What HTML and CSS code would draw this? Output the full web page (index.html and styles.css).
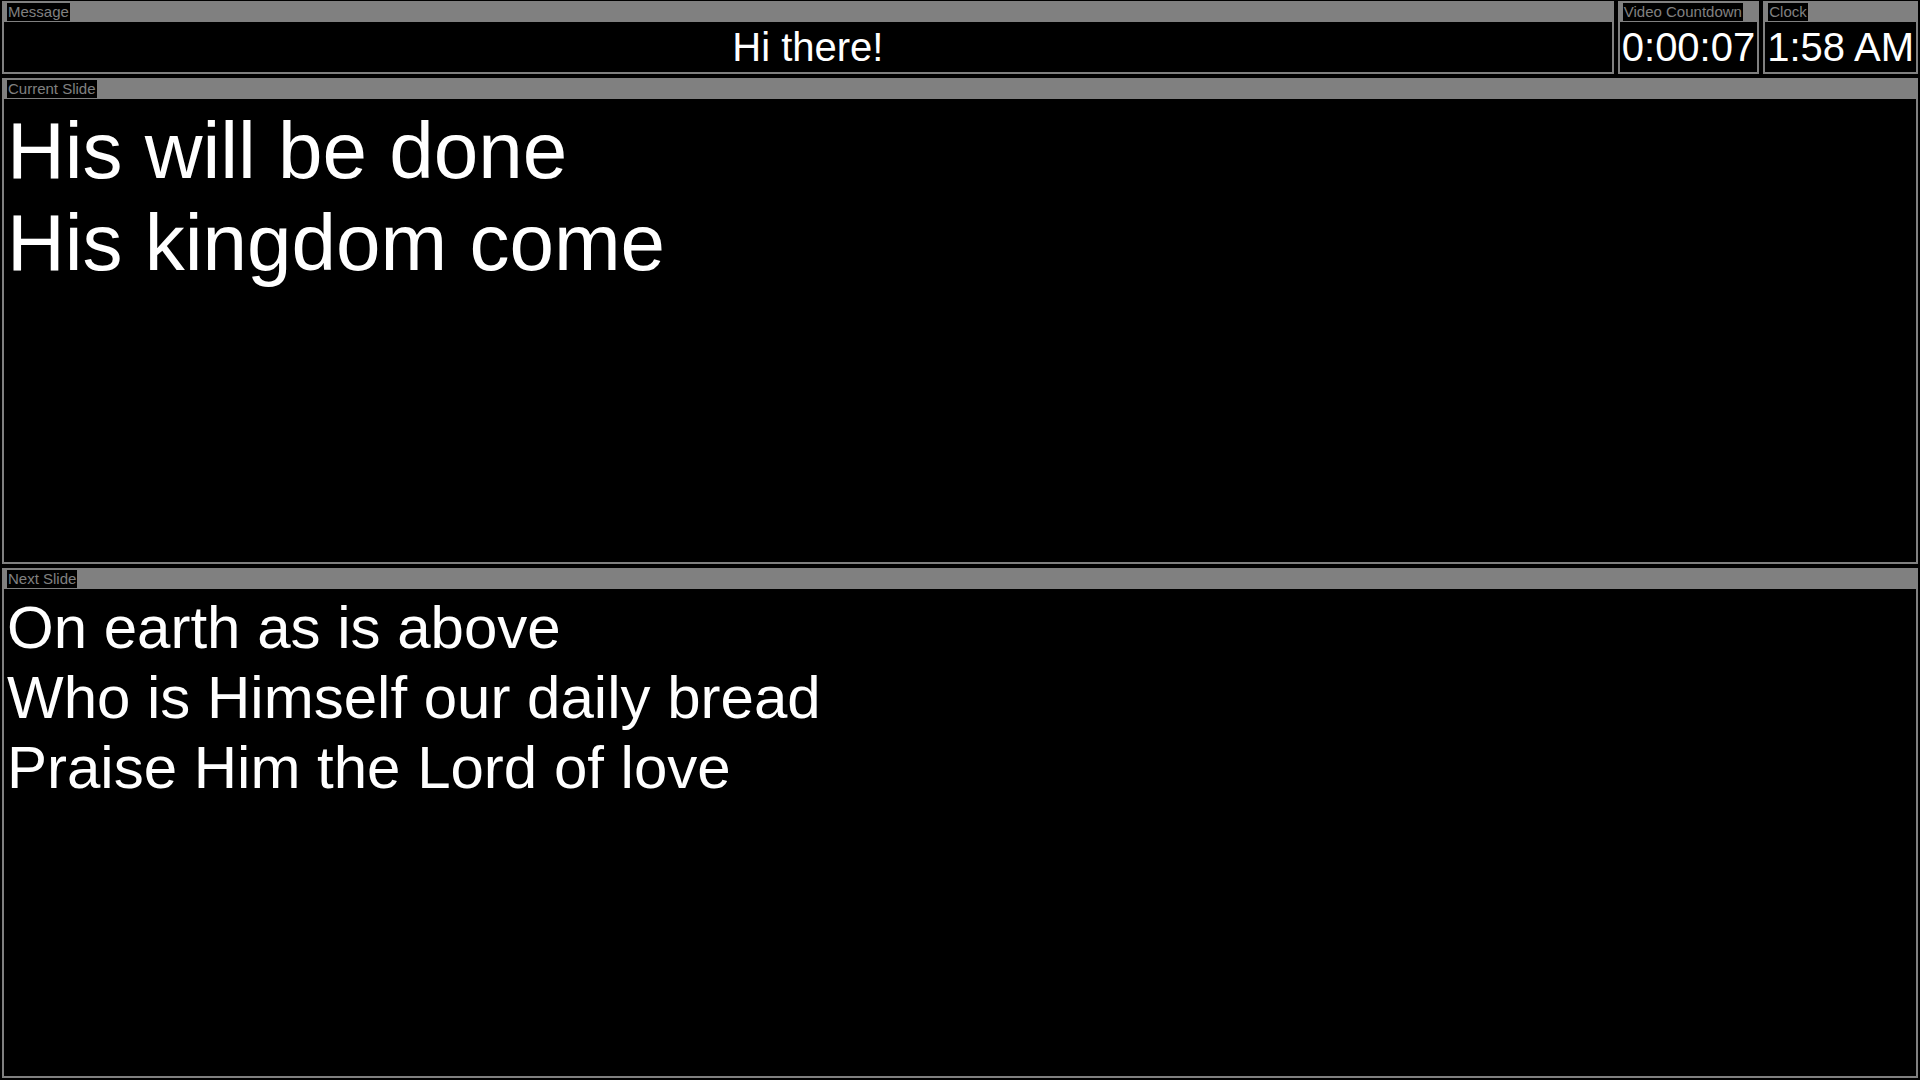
FILE: index.html
```html
<!DOCTYPE html>
<html lang="en">
<head>
<meta charset="utf-8">
<title>Stage Display</title>
<link rel="stylesheet" href="styles.css">
</head>
<body>
<div class="stage">
  <div class="top-row">
    <section class="panel panel-message">
      <div class="panel-head"><span class="label">Message</span></div>
      <div class="panel-body message-body">Hi there!</div>
    </section>
    <section class="panel panel-fit">
      <div class="panel-head"><span class="label">Video Countdown</span></div>
      <div class="panel-body timer-body">0:00:07</div>
    </section>
    <section class="panel panel-fit">
      <div class="panel-head"><span class="label">Clock</span></div>
      <div class="panel-body timer-body">1:58 AM</div>
    </section>
  </div>
  <section class="panel">
    <div class="panel-head"><span class="label">Current Slide</span></div>
    <div class="panel-body slide-body current">
      <div>His will be done</div>
      <div>His kingdom come</div>
    </div>
  </section>
  <section class="panel">
    <div class="panel-head"><span class="label">Next Slide</span></div>
    <div class="panel-body slide-body next">
      <div>On earth as is above</div>
      <div>Who is Himself our daily bread</div>
      <div>Praise Him the Lord of love</div>
    </div>
  </section>
</div>
</body>
</html>
```
FILE: styles.css
```css
html, body {
  margin: 0;
  padding: 0;
  background: #000;
}
body {
  font-family: "Liberation Sans", Arial, sans-serif;
  color: #fff;
}
.stage {
  box-sizing: border-box;
  width: 1920px;
  height: 1080px;
  padding: 1px 2px 2px 2px;
  display: grid;
  grid-template-rows: 73px 486px 510px;
  row-gap: 4px;
}
.top-row {
  display: flex;
  gap: 4px;
  min-height: 0;
}
.panel {
  box-sizing: border-box;
  border: 2px solid #808080;
  background: #000;
  display: flex;
  flex-direction: column;
  min-height: 0;
  overflow: hidden;
}
.panel-message {
  flex: 1;
}
.panel-fit {
  flex: 0 0 auto;
}
.panel-head {
  background: #808080;
  padding: 0 0 1px 3px;
  line-height: 18px;
  height: 18px;
}
.label {
  display: inline-block;
  background: #000;
  color: #808080;
  font-size: 15px;
  line-height: 18px;
  padding: 0 1px;
  vertical-align: top;
}
.panel-body {
  flex: 1;
  min-height: 0;
  color: #fff;
}
.message-body {
  font-size: 40px;
  display: flex;
  align-items: center;
  justify-content: center;
}
.timer-body {
  font-size: 40px;
  display: flex;
  align-items: center;
  padding: 0 2px;
  white-space: nowrap;
}
.slide-body {
  padding: 4px 3px 0 3px;
}
.slide-body.current {
  padding-top: 6px;
  font-size: 80px;
  line-height: 92px;
}
.slide-body.next {
  font-size: 60px;
  line-height: 70px;
}
```
